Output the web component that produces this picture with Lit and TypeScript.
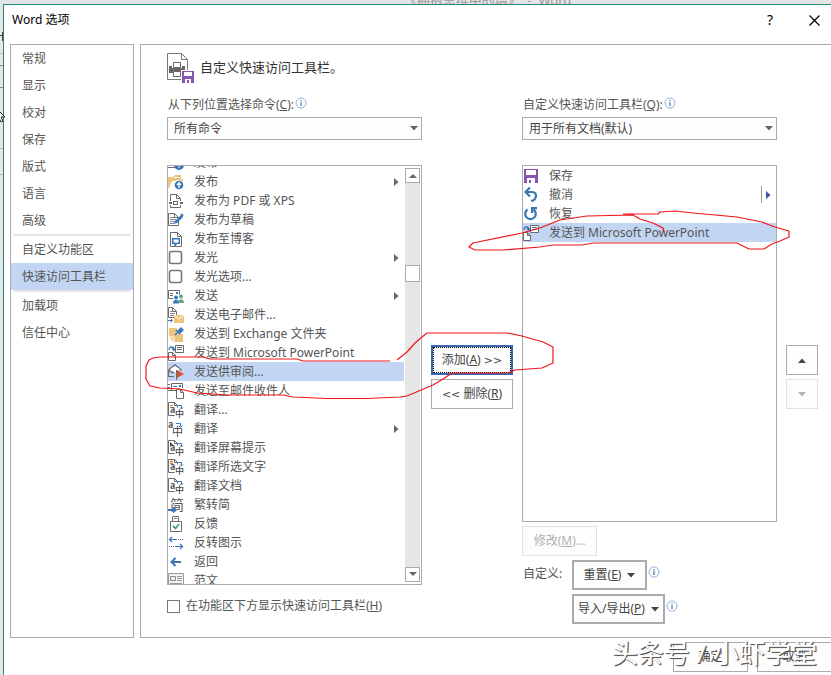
import { LitElement, html, svg, css, nothing, TemplateResult, SVGTemplateResult } from "lit";
import { customElement, property, query } from "lit/decorators.js";
import { classMap } from "lit/directives/class-map.js";

const G = "#6a6a6a";
const B = "#3a76b5";
const T = "#edc47c";
const P = "#8a56ae";

const page = (x = 2, y = 1, w = 11, h = 13) => svg`
  <path d="M${x + 0.5} ${y + 0.5}h${w - 5}l4 4v${h - 5}h-${w - 1}z" fill="#fff" stroke=${G}/>
  <path d="M${x + w - 4.5} ${y + 0.5}v4h4" fill="none" stroke=${G}/>`;

const translated = (mark: SVGTemplateResult | typeof nothing) => svg`
  <path d="M.5 13.500V.5h6l3 3v2M6.500.5v3h3M.5 13.500h6" fill="none" stroke=${G}/>
  ${mark}
  <text x="2" y="11" font-size="9" font-weight="700" fill="#555">a</text>
  <text x="7" y="15" font-size="9" font-weight="500" fill="#444">中</text>
  <path d="M10 3.500h3.500v3M12 5.500l1.500 1.500 1.500-1.500" fill="none" stroke=${B}/>`;

const icons: Record<string, SVGTemplateResult> = {
  web: svg`<path d="M0 12.500h7" stroke=${G}/><circle cx="11" cy="10" r="5" fill=${B}/><path d="M11 13V8M9 10l2-2 2 2" stroke="#fff" fill="none"/>`,
  folderUp: svg`<path d="M0 14V3h5l2-2h6v4h2v3L13 7H4L1 14z" fill=${T}/><path d="M6 3.500h6" stroke="#fff"/>
    <circle cx="11" cy="11" r="5" fill="#fff"/><circle cx="11" cy="11" r="4.300" fill=${B}/><path d="M11 14V9M9 11l2-2.200 2 2.200" stroke="#fff" fill="none" stroke-width="1.300"/>`,
  pdf: svg`<path d="M2.500 8V1.500h6l4 4V8M8.500 1.500v4h4M2.500 12v2.500h10V12" fill="none" stroke=${G}/>
    <path d="M1 10h3M12 10h3" stroke=${G} stroke-width="2"/><rect x="5.500" y="8.500" width="4" height="3" fill="none" stroke=${G}/>`,
  draft: svg`${page(0, 1, 11, 13)}<path d="M2 5.500h4M2 7.500h6M2 9.500h5M2 11.500h4" stroke="#888"/>
    <path d="M6 12l1-3 6-6 2 2-6 6z" fill=${B}/><path d="M13 2l2 2" stroke=${B} stroke-width="2"/>`,
  blog: svg`${page(2, 1, 12, 15)}<path d="M4.700 7.700h6.600v4.600H9l-2 2v-2H4.700z" fill="#fff" stroke=${B} stroke-width="1.500"/>`,
  box: svg`<rect x="1.500" y="1.500" width="12" height="12" rx="2" fill="#fff" stroke="#777" stroke-width="1.600"/>`,
  share: svg`<path d="M5 10.500H.5v-8h11v4M2 5.500h3M2 7.500h3" fill="none" stroke=${G}/><rect x="8" y="4" width="2" height="2" fill=${B}/>
    <circle cx="13" cy="8.500" r="2" fill="#64a58c"/><path d="M10 15c0-5 6-5 6 0z" fill="#64a58c"/>
    <circle cx="8" cy="9.500" r="2" fill=${B}/><path d="M5 15.500c0-5 6-5 6 0z" fill=${B}/>`,
  mail: svg`${page(0, 0, 9, 11)}<path d="M2 4.500h2M2 6.500h5M2 8.500h4" stroke="#888"/><path d="M6 8h10v8H6z" fill=${T}/><path d="M6 8l5 4 5-4" fill="none" stroke="#fff"/>
    <path d="M0 13.500h4M2.500 11.500l2 2-2 2" fill="none" stroke=${B}/>`,
  exchange: svg`<path d="M1 2h8v6h6v8H6l-5-5z" fill=${T}/><path d="M1 11h5v5" stroke="#fff" fill="none"/>
    <path d="M7 9l3-3M8 4l4 4M10 5l3-3 2 2-3 3z" stroke=${B} stroke-width="1.500" fill=${B}/>`,
  ppt: svg`<path d="M7.500.5h8v7h-8zM9 2.500h5M9 4.500h5" fill="#fff" stroke=${G}/><path d="M1 5c0-4 5-4 5 0M4 3.500l2 2 1-2" fill="none" stroke=${B} stroke-width="1.300"/>
    <path d="M.5 7.500h4l3 3v5h-7zM4.500 7.500v3h3" fill="#fff" stroke=${G}/>`,
  review: svg`<path d="M.5 6L7 .8 13.500 6M.5 6v6.500H6M.5 6l4 3 3-2 3 0M13 6v1" fill="none" stroke=${G} stroke-width="1.200"/><path d="M2 5.500L7 2l5 3.500-4.500 3z" fill="#fff"/>
    <path d="M8.500 6v10" stroke=${G}/><path d="M9 6l7 4-7 4z" fill="#d6532f"/>`,
  recipient: svg`<path d="M3.500 8V.5h11V5M0 1.500h2M0 4.500h2M0 7.500h8" fill="none" stroke=${G}/><rect x="11" y="2" width="2" height="2" fill=${B}/><path d="M5 3.500h4" stroke=${B}/>
    <path d="M8.500 6.500h4l3 3v6h-7zM12.500 6.500v3h3" fill="#fff" stroke=${G}/>`,
  trDots: translated(svg`<path d="M2 3.500h3M2 5.500h3" stroke="#e08030"/>`),
  tr: svg`<text x="0" y="7" font-size="9" font-weight="700" fill="#555">a</text><text x="4" y="15" font-size="11" fill="#444">中</text>
    <path d="M8 2.500h4.500v3M10.500 4.500l2 2 2-2" fill="none" stroke=${B}/>`,
  trScreen: translated(svg`<path d="M2 2l4 3.500H3.500L2 7z" fill="#444"/>`),
  trSel: translated(svg`<path d="M2 2.500h3M2 4.500h3" stroke="#e08030" stroke-width="1.500"/>`),
  trDoc: translated(nothing),
  simp: svg`<text x="2" y="13" font-size="14" fill="#555">简</text><path d="M0 12h5V9.500l4 3.500-4 3.500V14H0z" fill=${B}/>`,
  feedback: svg`<path d="M4.500 5V.5h6V5M6 2.500h3M2.500 5.500h11v10h-11z" fill="none" stroke=${G}/><path d="M5 10l2.500 2.500L11 8" fill="none" stroke="#4f9c7f" stroke-width="1.800"/>`,
  flip: svg`<path d="M2 4.500h7" stroke=${B}/><path d="M10 4.500h5" stroke=${B} stroke-dasharray="1 1"/><path d="M4 2L1.500 4.500 4 7M12 9l2.500 2.500L12 14" fill="none" stroke=${B} stroke-width="1.300"/>
    <path d="M7 11.500h7" stroke=${B}/><path d="M1 11.500h6" stroke=${B} stroke-dasharray="1 1"/>`,
  back: svg`<path d="M4 8h9M7.500 4L3.500 8l4 4" fill="none" stroke=${B} stroke-width="2"/>`,
  sample: svg`<path d="M.5.5h15v13H.5z" fill="#f4f4f4" stroke="#999"/><path d="M2.500 3.500h5v4h-5z" fill="none" stroke="#888"/><path d="M9 3.500h5M9 5.500h5M9 7.500h5M2 10.500h12M2 12.500h12" stroke="#999"/>`,
  save: svg`<path d="M1 1h14v14H1z" fill=${P}/><path d="M3 2h10v5H3zM4 10h8v5H4z" fill="#fff"/><path d="M6 12h2v3H6z" fill=${P}/>`,
  undo: svg`<path d="M2 5h7c6 0 5 8-1 9" fill="none" stroke=${B} stroke-width="2.200"/><path d="M7 .5L2.500 5 7 9.500" fill="none" stroke=${B} stroke-width="2.200"/>`,
  redo: svg`<path d="M4.500 3.500a5.300 5.300 0 1 0 6 0" fill="none" stroke=${B} stroke-width="2.200"/><path d="M8 7V1h6v2.200h-3.800V7z" fill=${B}/>`,
};

const icon = (name: string) => html`<svg class="ico" viewBox="0 0 16 16" width="16" height="16" aria-hidden="true">${icons[name]}</svg>`;

interface Row { icon: string; text: string; sub?: "arrow" | "split"; selected?: boolean }

const commands: Row[] = [
  { icon: "web", text: "发布" },
  { icon: "folderUp", text: "发布", sub: "arrow" },
  { icon: "pdf", text: "发布为 PDF 或 XPS" },
  { icon: "draft", text: "发布为草稿" },
  { icon: "blog", text: "发布至博客" },
  { icon: "box", text: "发光", sub: "arrow" },
  { icon: "box", text: "发光选项..." },
  { icon: "share", text: "发送", sub: "arrow" },
  { icon: "mail", text: "发送电子邮件..." },
  { icon: "exchange", text: "发送到 Exchange 文件夹" },
  { icon: "ppt", text: "发送到 Microsoft PowerPoint" },
  { icon: "review", text: "发送供审阅...", selected: true },
  { icon: "recipient", text: "发送至邮件收件人" },
  { icon: "trDots", text: "翻译..." },
  { icon: "tr", text: "翻译", sub: "arrow" },
  { icon: "trScreen", text: "翻译屏幕提示" },
  { icon: "trSel", text: "翻译所选文字" },
  { icon: "trDoc", text: "翻译文档" },
  { icon: "simp", text: "繁转简" },
  { icon: "feedback", text: "反馈" },
  { icon: "flip", text: "反转图示" },
  { icon: "back", text: "返回" },
  { icon: "sample", text: "范文" },
];

const toolbar: Row[] = [
  { icon: "save", text: "保存" },
  { icon: "undo", text: "撤消", sub: "split" },
  { icon: "redo", text: "恢复" },
  { icon: "ppt", text: "发送到 Microsoft PowerPoint", selected: true },
];

const navGroups = [
  ["常规", "显示", "校对", "保存", "版式", "语言", "高级"],
  ["自定义功能区", "快速访问工具栏"],
  ["加载项", "信任中心"],
];

@customElement("command-list")
class CommandList extends LitElement {
  @property({ attribute: false }) rows: Row[] = [];
  @property({ type: Boolean }) scrollable = false;
  @property({ type: Number }) offset = 0;
  @property() name = "";
  @query(".rows") rowsEl!: HTMLElement;

  static styles = css`
    :host { display: flex; box-sizing: border-box; border: 1px solid #ababab; background: #fff; overflow: hidden; }
    .rows { flex: 1; min-width: 0; margin: 0; padding: 0; list-style: none; overflow: hidden; }
    .row { display: flex; align-items: center; height: 19px; line-height: 19px; padding-right: 5px; white-space: nowrap; }
    .row.selected { background: #c2d5f2; }
    .ico { flex: none; margin-right: 10px; font-family: "Noto Sans CJK SC", sans-serif; }
    .text { flex: 1; }
    .arrow { width: 5px; height: 8px; fill: #666; }
    .split { display: flex; align-items: center; height: 17px; border-left: 1px solid #999; padding-left: 4px; }
    .split .arrow { fill: #3c55a5; }
    .track { display: flex; flex-direction: column; width: 15px; margin: 2px 1px; background: #e6e6e6; }
    .step, .thumb { box-sizing: border-box; width: 15px; border: 1px solid #ababab; background: #fff; }
    .step { display: flex; align-items: center; justify-content: center; height: 15px; padding: 0; }
    .thumb { height: 17px; }
    .space { flex: 82; }
    .space.after { flex: 285; }
  `;

  firstUpdated() { this.rowsEl.scrollTop = this.offset; }

  render() {
    const arrow = html`<svg class="arrow" viewBox="0 0 5 8" aria-hidden="true"><path d="M0 0l4.500 4L0 8z"/></svg>`;
    return html`
      <ul class="rows" role="listbox" aria-label=${this.name}>
        ${this.rows.map(r => html`
          <li class=${classMap({ row: true, selected: !!r.selected })} role="option" aria-selected=${r.selected ? "true" : "false"}>
            ${icon(r.icon)}<span class="text">${r.text}</span>
            ${r.sub === "arrow" ? arrow : r.sub === "split" ? html`<span class="split">${arrow}</span>` : nothing}
          </li>`)}
      </ul>
      ${this.scrollable ? html`
        <div class="track">
          <button class="step" aria-label="向上滚动"><svg width="8" height="5"><path d="M0 5l4-4 4 4z" fill="#666"/></svg></button>
          <div class="space"></div><div class="thumb"></div><div class="space after"></div>
          <button class="step" aria-label="向下滚动"><svg width="8" height="5"><path d="M0 0h8L4 4z" fill="#666"/></svg></button>
        </div>` : nothing}`;
  }
}

@customElement("app-root")
class AppRoot extends LitElement {
  static styles = css`
    :host {
      display: block; position: relative; overflow: hidden; min-height: 100vh; background: #e6e6e6; color: #555;
      font: 12px/16px "Noto Sans", "Noto Sans CJK SC", sans-serif;
    }
    * { box-sizing: border-box; }
    button, select, input { font: inherit; color: inherit; margin: 0; }
    u { text-underline-offset: 1px; }
    .backdrop { display: flex; align-items: flex-end; justify-content: center; height: 4px; overflow: hidden; padding-left: 144px; color: #999; font-size: 13px; line-height: 8px; white-space: pre; }
    .body { display: flex; }
    .edge { flex: none; width: 3px; overflow: hidden; }
    .dialog { flex: 1; min-width: 0; min-height: calc(100vh - 4px); border: solid #23897b; border-width: 1px 0 0 1px; background: #fff; }
    .titlebar { display: flex; align-items: center; height: 30px; padding: 0 10px 0 8px; color: #000; }
    .titlebar h1 { flex: 1; margin: 0; font-size: 12px; font-weight: 400; }
    .plain { display: flex; align-items: center; justify-content: center; width: 14px; height: 20px; padding: 0; border: 0; background: none; font-size: 14px; }
    .help { margin-right: 30px; }
    .panes { display: flex; gap: 6px; padding: 9px 0 4px 6px; }
    .nav { flex: none; width: 124px; border: 1px solid #ababab; }
    .nav a { display: block; height: 27px; line-height: 27px; padding-left: 11px; color: inherit; text-decoration: none; }
    .nav a.current { background: #c2d5f2; }
    .nav hr { height: 2px; margin: 0 3px; border: 0; background: #e4e4e4; }
    .main { flex: 1; min-width: 0; border: 1px solid #ababab; border-right: 0; padding: 8px 13px 13px 26px; }
    .heading { display: flex; gap: 5px; height: 32px; margin-bottom: 12px; }
    .heading h2 { margin: 0; font-size: 13px; line-height: 28px; font-weight: 400; color: #333; }
    .grid { display: grid; grid-template-columns: minmax(0, 1fr) 82px minmax(0, 1fr) 32px; column-gap: 9px; }
    .field { display: flex; flex-direction: column; gap: 4px; margin-bottom: 25px; }
    .field.target { grid-column: 3; }
    .caption { display: flex; gap: 1px; height: 16px; padding-left: 1px; }
    .pick { display: grid; align-items: center; }
    .pick select, .pick svg { grid-area: 1 / 1; }
    .pick select { appearance: none; width: 100%; height: 23px; padding: 0 20px 0 6px; border: 1px solid #ababab; border-radius: 0; background: #fdfdfd; color: #444; }
    .pick svg { justify-self: end; margin-right: 4px; pointer-events: none; }
    .source, .chosen { display: flex; flex-direction: column; }
    .source { grid-column: 1; }
    .source command-list { height: 420px; }
    .chosen command-list { height: 357px; margin-bottom: 4px; }
    .check { display: flex; align-items: center; gap: 6px; margin-top: 13px; white-space: nowrap; }
    .check input { appearance: none; width: 13px; height: 13px; border: 1px solid #777; background: #fff; }
    .stack { display: flex; flex-direction: column; gap: 4px; padding-top: 180px; }
    .btn { display: flex; align-items: center; justify-content: center; gap: 6px; height: 30px; padding: 0; border: 1px solid #ababab; background: #fdfdfd; color: #444; white-space: nowrap; }
    .btn.primary { border: 2px solid #3b66b0; outline: 1px dotted #000; outline-offset: -3px; }
    .btn.menu { border-width: 2px; padding: 0 4px; }
    .btn.reset, .btn.modify { width: 75px; }
    .btn:disabled { color: #b1b1b1; border-color: #e1e1e1; }
    .chevrons { font-family: "DejaVu Sans", sans-serif; font-size: 11px; }
    .custom { display: grid; grid-template-columns: 49px auto; gap: 4px 1px; margin-top: 4px; }
    .custom label { padding: 6px 0 0 1px; }
    .cell { grid-column: 2; display: flex; gap: 1px; }
    .cell > svg { margin-top: 6px; }
    .footer { display: flex; justify-content: flex-end; gap: 9px; }
    .footer .btn { width: 75px; }
    .footer .cut { width: 74px; border-right: 0; }
    .overlay { position: absolute; left: 0; top: 0; pointer-events: none; }
    .mark { position: absolute; right: 14px; bottom: 4px; font-size: 26px; line-height: 36px; color: #fff; text-shadow: 1px 1px 1px #555, 1px 1px 0 #777; white-space: pre; pointer-events: none; }
  `;

  private info(): TemplateResult {
    return html`<svg width="12" height="12" viewBox="0 0 12 12" aria-hidden="true"><circle cx="6" cy="6" r="5" fill="#fff" stroke="#8db1de"/><path d="M6 3v1.300M6 5.200V9" stroke="#3f6fae" stroke-width="1.200"/></svg>`;
  }

  private caret(): TemplateResult {
    return html`<svg width="8" height="5" aria-hidden="true"><path d="M0 0h8L4 4.500z" fill="#444"/></svg>`;
  }

  private select(id: string, label: TemplateResult, value: string, extra = ""): TemplateResult {
    return html`<div class="field ${extra}">
      <div class="caption"><label for=${id}>${label}</label>${this.info()}</div>
      <div class="pick"><select id=${id}><option>${value}</option></select>
        <svg width="8" height="5" aria-hidden="true"><path d="M0 0h8L4 4.500z" fill="#666"/></svg></div>
    </div>`;
  }

  render() {
    return html`
      <div class="backdrop">《拥抱思维中的墙》  -  Word</div>
      <div class="body">
        <svg class="edge" width="3" height="200" aria-hidden="true">
          <path d="M0 31.500h3M2.500 28v9" stroke="#444"/><path d="M0 49.500h3M0 144.500h3M0 170.500h3" stroke="#bbb"/><path d="M0 61.500h3M0 83.500h3" stroke="#888"/>
        </svg>
        <section class="dialog" role="dialog" aria-label="Word 选项">
          <header class="titlebar">
            <h1>Word 选项</h1>
            <button class="plain help" aria-label="帮助">?</button>
            <button class="plain" aria-label="关闭"><svg width="11" height="11"><path d="M.5.5l10 10M10.500.5l-10 10" stroke="#000" stroke-width="1.200"/></svg></button>
          </header>
          <div class="panes">
            <nav class="nav">
              ${navGroups.map((g, i) => html`${i ? html`<hr>` : nothing}${g.map(t => html`<a href="#" class=${classMap({ current: t === "快速访问工具栏" })}>${t}</a>`)}`)}
            </nav>
            <main class="main">
              <div class="heading">
                <svg width="28" height="32" viewBox="0 0 28 32" aria-hidden="true">
                  <path d="M.5.5h14l6 6v20H.5zM14.500.5v6h6" fill="#fff" stroke="#777"/>
                  <path d="M6.500 9.500h7v5h-7z" fill="#fff" stroke="#666"/><path d="M2 13h3v2h10v-2h3v7h-4v-2H6v2H2z" fill="#666"/><path d="M6.500 18.500h7v5h-7z" fill="#fff" stroke="#666"/>
                  <path d="M14 17h14v15H14z" fill="#fff"/><path d="M15 18h12v12H15z" fill=${P}/><path d="M17 19h8v4h-8zM18 26h6v4h-6z" fill="#fff"/><path d="M20 27h2v3h-2z" fill=${P}/>
                </svg>
                <h2>自定义快速访问工具栏。</h2>
              </div>
              <div class="grid">
                ${this.select("from", html`从下列位置选择命令(<u>C</u>):`, "所有命令")}
                ${this.select("to", html`自定义快速访问工具栏(<u>Q</u>):`, "用于所有文档(默认)", "target")}
                <div class="source">
                  <command-list .rows=${commands} scrollable .offset=${13} name="命令"></command-list>
                  <label class="check"><input type="checkbox"><span>在功能区下方显示快速访问工具栏(<u>H</u>)</span></label>
                </div>
                <div class="stack">
                  <button class="btn primary"><span>添加(<u>A</u>) <span class="chevrons">&gt;&gt;</span></span></button>
                  <button class="btn"><span><span class="chevrons">&lt;&lt;</span> 删除(<u>R</u>)</span></button>
                </div>
                <div class="chosen">
                  <command-list .rows=${toolbar} name="快速访问工具栏"></command-list>
                  <button class="btn modify" disabled><span>修改(<u>M</u>)...</span></button>
                  <div class="custom">
                    <label for="reset">自定义:</label>
                    <div class="cell"><button id="reset" class="btn menu reset"><span>重置(<u>E</u>)</span>${this.caret()}</button>${this.info()}</div>
                    <div class="cell"><button class="btn menu"><span>导入/导出(<u>P</u>)</span>${this.caret()}</button>${this.info()}</div>
                  </div>
                </div>
                <div class="stack">
                  <button class="btn" aria-label="上移"><svg width="8" height="5"><path d="M0 5l4-4.500L8 5z" fill="#444"/></svg></button>
                  <button class="btn" disabled aria-label="下移"><svg width="8" height="5"><path d="M0 0h8L4 4.500z" fill="#b1b1b1"/></svg></button>
                </div>
              </div>
            </main>
          </div>
          <footer class="footer"><button class="btn">确定</button><button class="btn cut">取消</button></footer>
        </section>
      </div>
      <svg class="overlay" width="831" height="420" aria-hidden="true">
        <g fill="none" stroke="#f01418" stroke-width="1.200" stroke-linejoin="round">
          <path d="M390 361L303 361 297 359H210L203 357H160L153 358 149 360 146 366V379L150 386 160 388 180 389 197 393 227 395H283L293 397 327 398.500H367L400 397 407 396 433 385 443 379 452 373H508L515 370 542 368 553 363V347L543 342 522 336 507 333H427L422 337 415 343 407 352 397 360"/>
          <path d="M623 214H658L660 212 675 211 693 213 737 217 762 222 775 227 789 231V237L780 241 772 244 764 249H749L737 243H593L582 245H553L540 247 503 250H475L469 247 473 243 522 233 540 228 560 220 587 216 633 215 640 219 653 223 663 228 664 232"/>
        </g>
        <path d="M-5 107L5 117H1l2 4-2 1-2-4-4 3z" fill="#fff" stroke="#222"/>
      </svg>
      <div class="mark">头条号 / 小虾学堂</div>`;
  }
}
